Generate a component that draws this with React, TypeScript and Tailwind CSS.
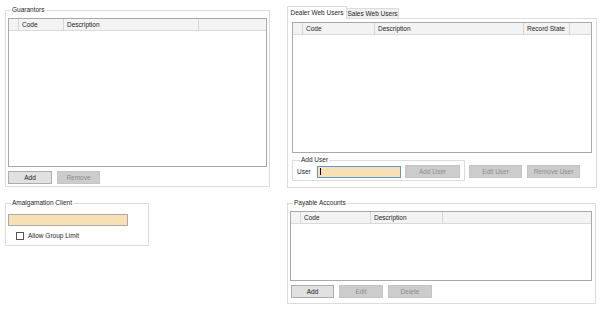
import React from "react"

type Col = { label: string; w: string }

const Grid = ({ cols, className }: { cols: Col[]; className: string }) => (
  <div className={`flex flex-col border border-[#a9a9a9] bg-white ${className}`}>
    <div className="flex h-[12px] shrink-0 border-b border-[#dadada] bg-[#f3f3f3] text-[#222]">
      <div className="w-[10px] shrink-0 border-r border-[#d6d6d6]" />
      {cols.map((c) => (
        <div
          key={c.label}
          className={`${c.w} shrink-0 border-r border-[#d6d6d6] pl-[3px] leading-[12px]`}>
          {c.label}
        </div>
      ))}
      <div className="flex-1" />
    </div>
    <div className="flex-1" />
  </div>
)

const Btn = ({
  label,
  w,
  disabled,
}: {
  label: string
  w: string
  disabled?: boolean
}) => (
  <button
    className={`${w} h-[13px] leading-[11px] border ${
      disabled
        ? "border-[#c4c4c4] bg-[#cccccc] text-[#8c8c8c]"
        : "border-[#adadad] bg-[#e1e1e1] text-[#1a1a1a]"
    }`}>
    {label}
  </button>
)

const Group = ({
  title,
  className,
  children,
}: {
  title: string
  className: string
  children: React.ReactNode
}) => (
  <fieldset className={`border border-[#dcdcdc] ${className}`}>
    <legend className="ml-[3px] px-[1px] leading-[8px] text-[#1e1e1e]">{title}</legend>
    {children}
  </fieldset>
)

export default function App() {
  return (
    <div
      className="flex h-[314px] w-[602px] bg-white pt-[6px] text-[6.5px] text-[#262626]"
      style={{ fontFamily: '"Liberation Sans", Arial, sans-serif' }}>
      {/* left column */}
      <div className="ml-[5px] flex w-[265px] flex-col">
        <Group title="Guarantors" className="h-[181px] px-[2px] pt-[4px]">
          <Grid
            className="h-[149px]"
            cols={[
              { label: "Code", w: "w-[45px]" },
              { label: "Description", w: "w-[135px]" },
            ]}
          />
          <div className="mt-[4px] flex gap-[5px]">
            <Btn label="Add" w="w-[44px]" />
            <Btn label="Remove" w="w-[43px]" disabled />
          </div>
        </Group>

        <Group title="Amalgamation Client" className="mt-[12px] h-[47px] w-[144px] px-[2px] pt-[7px]">
          <div className="h-[12px] w-[120px] border border-[#a9a9a9] bg-[#f8dfb4]" />
          <div className="mt-[5px] flex items-center pl-[8px]">
            <div className="h-[8px] w-[8px] border border-[#555] bg-white" />
            <span className="ml-[4px]">Allow Group Limit</span>
          </div>
        </Group>
      </div>

      {/* right column */}
      <div className="ml-[17px] flex w-[310px] flex-col">
        <div className="flex h-[12px] items-end">
          <div className="relative z-10 -mb-px flex h-[13px] w-[60px] items-center justify-center border border-b-0 border-[#dcdcdc] bg-white">
            Dealer Web Users
          </div>
          <div className="flex h-[10px] w-[52px] items-center justify-center border border-l-0 border-b-0 border-[#dcdcdc] bg-[#f0f0f0] pt-[1px]">
            Sales Web Users
          </div>
        </div>
        <div className="flex h-[170px] flex-col border border-[#dcdcdc] px-[4px] pt-[3px]">
          <Grid
            className="h-[131px] w-[300px]"
            cols={[
              { label: "Code", w: "w-[72px]" },
              { label: "Description", w: "w-[149px]" },
              { label: "Record State", w: "w-[46px]" },
            ]}
          />
          <div className="mt-[3px] flex items-end">
            <Group title="Add User" className="h-[25px] w-[171px] px-[4px]">
              <div className="flex items-center pt-[1px]">
                <span className="w-[20px]">User</span>
                <div className="flex h-[12px] w-[84px] items-center border border-[#5b9bd5] bg-[#f8dfb4] pl-[2px]">
                  <div className="h-[7px] w-[1px] bg-black" />
                </div>
                <div className="ml-[4px]">
                  <Btn label="Add User" w="w-[55px]" disabled />
                </div>
              </div>
            </Group>
            <div className="mb-[3px] ml-[4px] flex gap-[5px]">
              <Btn label="Edit User" w="w-[53px]" disabled />
              <Btn label="Remove User" w="w-[53px]" disabled />
            </div>
          </div>
        </div>

        <Group title="Payable Accounts" className="mt-[11px] h-[105px] w-[309px] px-[2px] pt-[4px]">
          <Grid
            className="h-[70px] w-[302px]"
            cols={[
              { label: "Code", w: "w-[70px]" },
              { label: "Description", w: "w-[72px]" },
            ]}
          />
          <div className="mt-[4px] flex gap-[5px] pl-[1px]">
            <Btn label="Add" w="w-[43px]" />
            <Btn label="Edit" w="w-[44px]" disabled />
            <Btn label="Delete" w="w-[44px]" disabled />
          </div>
        </Group>
      </div>
    </div>
  )
}
